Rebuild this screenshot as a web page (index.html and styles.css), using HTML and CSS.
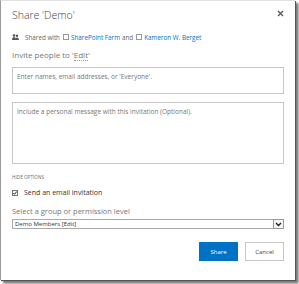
FILE: index.html
```html
<!DOCTYPE html>
<html lang="en">
<head>
    <meta charset="UTF-8">
    <title>Share 'Demo'</title>
    <link rel="stylesheet" href="styles.css">
</head>
<body>
    <div class="dialog">
        <div class="header">
            <h1>Share 'Demo'</h1>
            <svg class="close" width="7" height="7" viewBox="0 0 7 7"><path d="M1 1L6 6M6 1L1 6" stroke="#555" stroke-width="1.3"/></svg>
        </div>

        <div class="shared">
            <svg class="people" width="7" height="6" viewBox="0 0 7 6"><circle cx="2" cy="1.5" r="1.3" fill="#555"/><circle cx="5" cy="1.7" r="1.2" fill="#555"/><path d="M0 6c0-2 1-3 2-3s2 1 2 3zM3.5 6c0-1.6 .7-2.6 1.5-2.6S7 4.4 7 6z" fill="#555"/></svg>
            <span>Shared with</span>
            <span class="box"></span><a href="#">SharePoint Farm</a>
            <span>and</span>
            <span class="box"></span><a href="#">Kameron W. Berget</a>
        </div>

        <div class="invite">Invite people to '<span class="perm">Edit</span>'</div>

        <div class="field people-field">Enter names, email addresses, or 'Everyone'.</div>
        <div class="field message">Include a personal message with this invitation (Optional).</div>

        <div class="options">HIDE OPTIONS</div>

        <label class="check">
            <svg width="6" height="6" viewBox="0 0 6 6"><rect x="0.5" y="0.5" width="5" height="5" fill="#fff" stroke="#777"/><path d="M1.3 3l1.2 1.3L4.8 1.5" fill="none" stroke="#222" stroke-width="1"/></svg>
            <span>Send an email invitation</span>
        </label>

        <div class="select-label">Select a group or permission level</div>
        <div class="select">
            <span>Demo Members [Edit]</span>
            <span class="arrow"><svg width="7" height="5" viewBox="0 0 7 5"><path d="M1 1l2.5 2.5L6 1" fill="none" stroke="#222" stroke-width="1.4"/></svg></span>
        </div>

        <div class="buttons">
            <button class="btn btn-share">Share</button>
            <button class="btn btn-cancel">Cancel</button>
        </div>
    </div>
</body>
</html>
```

FILE: styles.css
```css
html, body {
    margin: 0;
    padding: 0;
    background: #fff;
}
body {
    width: 299px;
    height: 284px;
    font-family: 'Open Sans', sans-serif;
    color: #444;
}
.dialog {
    box-sizing: border-box;
    width: 295px;
    height: 280px;
    background: #fff;
    border-left: 1px solid #9a9a9a;
    border-top: 1px solid #e2e2e2;
    box-shadow: 1px 1px 0 #555, 3px 3px 2px #777, 4px 4px 3px #bbb;
    padding: 0 11px 0 11px;
    display: flex;
    flex-direction: column;
}
.header {
    display: flex;
    justify-content: space-between;
    align-items: flex-start;
    height: 22px;
}
h1 {
    margin: 7px 0 0 0;
    font-size: 10.5px;
    line-height: 14px;
    font-weight: 300;
    color: #444;
}
.close {
    margin: 9px 0 0 0;
}
.shared {
    display: flex;
    align-items: center;
    gap: 2px;
    margin-top: 10px;
    height: 8px;
    font-size: 6.3px;
    color: #666;
}
.people {
    margin-right: 4px;
}
.box {
    display: inline-block;
    width: 4px;
    height: 4px;
    border: 1px solid #999;
    margin-left: 1px;
}
.shared a {
    color: #0072c6;
    text-decoration: none;
}
.invite {
    margin-top: 9px;
    font-size: 8px;
    line-height: 10px;
    color: #777;
}
.perm {
    border-bottom: 1px dotted #999;
}
.field {
    box-sizing: border-box;
    border: 1px solid #c6c6c6;
    font-size: 6.5px;
    color: #777;
    padding: 4px 4px;
}
.people-field {
    margin-top: 7px;
    height: 27px;
}
.message {
    margin-top: 8px;
    height: 62px;
}
.options {
    margin-top: 10px;
    font-size: 4.5px;
    line-height: 6px;
    color: #666;
    letter-spacing: 0.1px;
}
.check {
    display: flex;
    align-items: center;
    gap: 6px;
    margin-top: 8px;
    font-size: 7px;
    line-height: 9px;
    color: #333;
}
.select-label {
    margin-top: 9px;
    font-size: 7.5px;
    line-height: 10px;
    color: #777;
}
.select {
    box-sizing: border-box;
    margin-top: 3px;
    height: 10px;
    border: 1px solid #aaa;
    display: flex;
    justify-content: space-between;
    align-items: center;
    font-size: 6px;
    color: #333;
    padding-left: 2px;
}
.arrow {
    box-sizing: border-box;
    width: 11px;
    height: 10px;
    margin-right: -1px;
    border: 1px solid #999;
    display: flex;
    align-items: center;
    justify-content: center;
    background: #f4f4f4;
}
.buttons {
    display: flex;
    justify-content: flex-end;
    gap: 7px;
    margin-top: 13px;
}
.btn {
    box-sizing: border-box;
    width: 39px;
    height: 19px;
    font-family: 'Open Sans', sans-serif;
    font-size: 6px;
    padding: 0;
}
.btn-share {
    background: #0072c6;
    border: 1px solid #0072c6;
    color: #fff;
}
.btn-cancel {
    background: #fff;
    border: 1px solid #c6c6c6;
    color: #444;
}
```
